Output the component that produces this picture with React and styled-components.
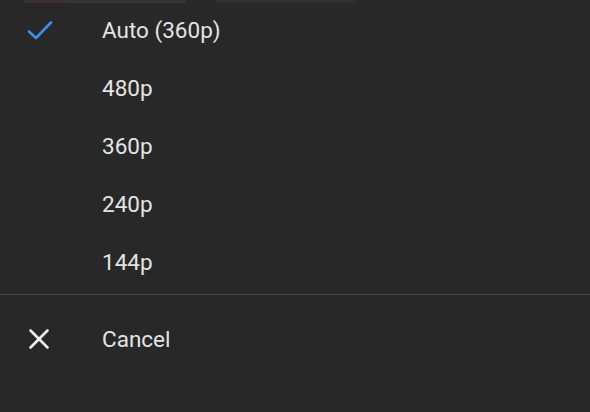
import React from 'react';
import styled, { createGlobalStyle } from 'styled-components';

const GlobalStyle = createGlobalStyle`
  html, body {
    margin: 0;
    padding: 0;
    background: #282828;
  }
  body {
    font-family: Roboto, "Noto Sans", "Liberation Sans", sans-serif;
  }
`;

const qualities = ['Auto (360p)', '480p', '360p', '240p', '144p'];

const App = () => {
    const selected = 'Auto (360p)';

    return (
        <Sheet>
            <GlobalStyle />
            <TopEdge>
                <Seg $w={24} />
                <Seg $w={44} $c="#3e302f" />
                <Seg $w={118} $c="#363638" />
                <Seg $w={30} />
                <Seg $w={140} $c="#303032" />
            </TopEdge>
            <List>
                {qualities.map((q) => (
                    <Row key={q}>
                        <IconCell $left={26}>
                            {q === selected && (
                                <svg width="28" height="22" viewBox="0 0 28 22">
                                    <path
                                        d="M3 12.5 L10 19 L25 3.5"
                                        fill="none"
                                        stroke="#3b8fe8"
                                        strokeWidth="2.6"
                                        strokeLinecap="round"
                                        strokeLinejoin="round"
                                    />
                                </svg>
                            )}
                        </IconCell>
                        <Label>{q}</Label>
                    </Row>
                ))}
            </List>
            <Divider />
            <CancelRow>
                <IconCell $left={28}>
                    <svg width="22" height="22" viewBox="0 0 22 22">
                        <path
                            d="M2.5 2.5 L19.5 19.5 M19.5 2.5 L2.5 19.5"
                            fill="none"
                            stroke="#f2f2f2"
                            strokeWidth="2.6"
                            strokeLinecap="round"
                        />
                    </svg>
                </IconCell>
                <Label>Cancel</Label>
            </CancelRow>
        </Sheet>
    );
};

export default App;

const Sheet = styled.div`
  width: 590px;
  height: 412px;
  background: #282828;
  display: flex;
  flex-direction: column;
  overflow: hidden;
`;

const TopEdge = styled.div`
  height: 3px;
  display: flex;
  margin-bottom: -2px;
`;

const Seg = styled.div`
  width: ${(p) => p.$w}px;
  height: 100%;
  background: ${(p) => p.$c || 'transparent'};
`;

const List = styled.div`
  display: flex;
  flex-direction: column;
`;

const Row = styled.div`
  height: 58px;
  display: flex;
  align-items: center;
`;

const IconCell = styled.div`
  width: 102px;
  padding-left: ${(p) => p.$left}px;
  box-sizing: border-box;
  display: flex;
  align-items: center;
`;

const Label = styled.span`
  font-size: 22.5px;
  color: #e4e4e4;
`;

const Divider = styled.div`
  height: 1px;
  background: #454545;
  margin-top: 3px;
`;

const CancelRow = styled.div`
  height: 58px;
  margin-top: 15px;
  display: flex;
  align-items: center;
`;
